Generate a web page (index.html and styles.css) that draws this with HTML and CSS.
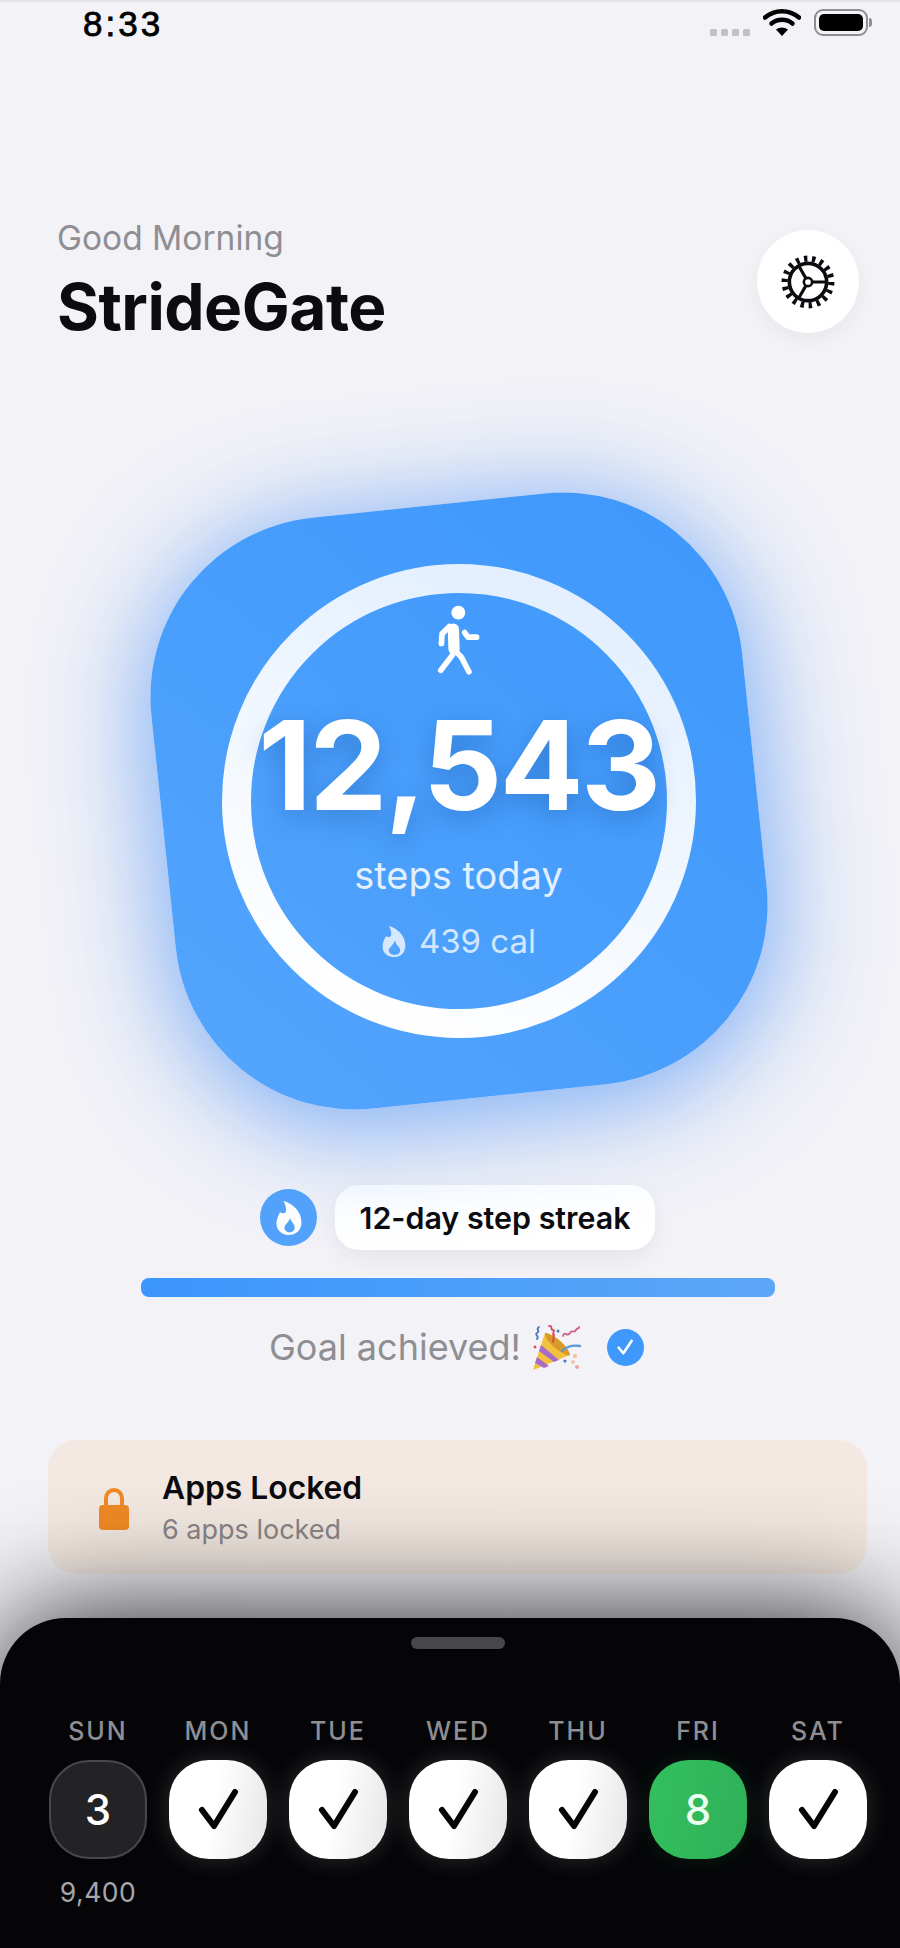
FILE: index.html
```html
<!DOCTYPE html>
<html lang="en">
<head>
<meta charset="utf-8">
<title>StrideGate</title>
<link rel="stylesheet" href="styles.css">
</head>
<body>
<main class="app">
  <div class="status-bar">
    <span class="clock">8:33</span>
    <div class="status-icons">
      <div class="signal"><i></i><i></i><i></i><i></i></div>
      <svg class="wifi" viewBox="0 0 38 28"><path d="M2 9.500C12 1 26 1 36 9.500" class="wifi-arc"/><path d="M8.500 15.500C14.500 10.500 23.500 10.500 29.500 15.500" class="wifi-arc"/><path d="M19 28L13 21.500C16.500 18.800 21.500 18.800 25 21.500Z" class="wifi-dot"/></svg>
      <div class="battery"><div class="battery-fill"></div></div>
      <div class="battery-tip"></div>
    </div>
  </div>

  <header class="header">
    <div class="titles">
      <p class="greeting">Good Morning</p>
      <h1 class="brand">StrideGate</h1>
    </div>
    <button class="settings" aria-label="Settings">
      <svg class="gear" viewBox="-27 -27 54 54">
        <circle r="22.500" class="gear-teeth" pathLength="18"/>
        <circle r="18" class="gear-ring"/>
        <path d="M4 0H18M-2 -3.500L-9 -15.600M-2 3.500L-9 15.600" class="gear-spokes"/>
        <circle r="4" class="gear-hub"/>
      </svg>
    </button>
  </header>

  <section class="hero">
    <div class="blob"></div>
    <svg class="ring" viewBox="0 0 474 474">
      <defs>
        <linearGradient id="ringFill" x1="0.700" y1="0" x2="0.300" y2="1">
          <stop offset="0" stop-color="#e3effe"/>
          <stop offset="1" stop-color="#ffffff"/>
        </linearGradient>
      </defs>
      <circle cx="237" cy="237" r="222.500" fill="none" stroke="url(#ringFill)" stroke-width="29"/>
    </svg>
    <div class="readout">
      <svg class="walker" viewBox="70 30 150 220">
        <circle cx="143" cy="62" r="21" class="walker-head"/>
        <path d="M128 112L130 172" class="walker-body"/>
        <path d="M116 104L94 126L92 155M162 122L172 136H198M125 190L90 236M132 175L152 196L175 240" class="walker-limbs"/>
      </svg>
      <div class="steps">12,543</div>
      <div class="steps-label">steps today</div>
      <div class="calories">
        <svg class="cal-flame" viewBox="0 0 24 30">
          <path d="M7 0C15 2 23 9 23 19C23 26 18 30 12 30C6 30 1 26 1 20C1 15 3 13 4 10C6 11 8 11 9 10C10 7 9 3 7 0Z" class="flame-pale"/>
          <path d="M13 14C14 19 18 20 18 23.500C18 26.500 15.500 28 12.500 28C9.500 28 7 26.500 7 23.500C7 21 11 19 13 14Z" class="flame-core"/>
        </svg>
        <span>439 cal</span>
      </div>
    </div>
  </section>

  <div class="streak">
    <div class="streak-badge">
      <svg class="streak-flame" viewBox="0 0 24 30">
        <path d="M7 0C15 2 23 9 23 19C23 26 18 30 12 30C6 30 1 26 1 20C1 15 3 13 4 10C6 11 8 11 9 10C10 7 9 3 7 0Z" class="flame-white"/>
        <path d="M13 15C14 19 17 20 17 23.500C17 26 15 27.500 12.500 27.500C10 27.500 8 26 8 23.500C8 21 11 20 13 15Z" class="flame-core"/>
      </svg>
    </div>
    <div class="streak-pill">12-day step streak</div>
  </div>

  <div class="progress"></div>

  <div class="goal">
    <span class="goal-text">Goal achieved!</span>
    <svg class="popper" viewBox="0 0 49 47">
      <path d="M1 46L13 9C22 10 36 22 38 31Z" fill="#f2c23e"/>
      <path d="M13 9C22 10 36 22 38 31C32 33 12 17 13 9Z" fill="#d99a2b"/>
      <path d="M9 21L27 36L22 38L7 27Z" fill="#a96bc9"/>
      <path d="M5 33L17 42L12 44L3 39Z" fill="#a96bc9"/>
      <path d="M7 3C3 5 9 7 5 9C2 11 8 12 5 15" class="conf conf-blue"/>
      <path d="M17 2C21 1 18 6 21 6C24 6 19 11 22 11L21 18" class="conf conf-red"/>
      <path d="M31 12C33 6 35 14 38 9C40 5 42 10 44 6C45 3 47 6 47 3" class="conf conf-pink"/>
      <path d="M30 27C35 22 42 21 48 22" class="conf conf-sky"/>
      <circle cx="26" cy="7" r="1.500" fill="#3f78c9"/>
      <circle cx="33" cy="37" r="1.600" fill="#3f78c9"/>
      <circle cx="43" cy="32" r="2" fill="#eebf98"/>
      <circle cx="41" cy="38" r="1.800" fill="#eebf98"/>
      <circle cx="45" cy="43" r="2" fill="#e9a6a0"/>
      <circle cx="3" cy="23" r="1.500" fill="#d9534f"/>
    </svg>
    <div class="goal-check">
      <svg viewBox="0 0 20 20"><path d="M5.500 10.500L8.800 14.500L14.800 5.500" class="goal-tick"/></svg>
    </div>
  </div>

  <section class="locked">
    <svg class="lock" viewBox="0 0 30 42">
      <path d="M7 19V10.500C7 5.500 10.500 2 15 2C19.500 2 23 5.500 23 10.500V19" class="lock-shackle"/>
      <rect x="0" y="17" width="30" height="25" rx="4" class="lock-body"/>
    </svg>
    <div class="locked-text">
      <div class="locked-title">Apps Locked</div>
      <div class="locked-sub">6 apps locked</div>
    </div>
  </section>

  <section class="sheet">
    <div class="handle"></div>
    <div class="week">
      <div class="day">
        <span class="day-name">SUN</span>
        <div class="tile tile-dark">3</div>
        <span class="day-count">9,400</span>
      </div>
      <div class="day">
        <span class="day-name">MON</span>
        <div class="tile tile-done"><svg class="tick" viewBox="0 0 42 42"><path d="M5 21L17 37L38 3"/></svg></div>
      </div>
      <div class="day">
        <span class="day-name">TUE</span>
        <div class="tile tile-done"><svg class="tick" viewBox="0 0 42 42"><path d="M5 21L17 37L38 3"/></svg></div>
      </div>
      <div class="day">
        <span class="day-name">WED</span>
        <div class="tile tile-done"><svg class="tick" viewBox="0 0 42 42"><path d="M5 21L17 37L38 3"/></svg></div>
      </div>
      <div class="day">
        <span class="day-name">THU</span>
        <div class="tile tile-done"><svg class="tick" viewBox="0 0 42 42"><path d="M5 21L17 37L38 3"/></svg></div>
      </div>
      <div class="day">
        <span class="day-name">FRI</span>
        <div class="tile tile-green">8</div>
      </div>
      <div class="day">
        <span class="day-name">SAT</span>
        <div class="tile tile-white"><svg class="tick" viewBox="0 0 42 42"><path d="M5 21L17 37L38 3"/></svg></div>
      </div>
    </div>
  </section>
</main>
</body>
</html>
```

FILE: styles.css
```css
* { box-sizing: border-box; }

html, body { margin: 0; padding: 0; }

body {
  font-family: Inter, "Liberation Sans", sans-serif;
  background: #f2f2f7;
  color: #0c0c10;
}

.app {
  width: 900px;
  height: 1948px;
  overflow: hidden;
  display: flex;
  flex-direction: column;
  background: #f2f2f7;
  border-top: 2px solid #e2e2e7;
}

/* status bar */
.status-bar {
  height: 48px;
  display: flex;
  justify-content: space-between;
  align-items: flex-start;
  padding: 4px 28px 0 83px;
}

.clock {
  font-family: "Liberation Sans", sans-serif;
  font-size: 35px;
  line-height: 36px;
  letter-spacing: 3px;
  color: #000;
  font-weight: 400;
  -webkit-text-stroke: 0.8px #000;
}

.status-icons {
  display: flex;
  align-items: flex-start;
  padding-top: 2px;
}

.signal {
  display: flex;
  gap: 4px;
  margin-top: 21px;
  margin-right: 13px;
}

.signal i {
  display: block;
  width: 7px;
  height: 7px;
  border-radius: 1.500px;
  background: #c0c0c5;
}

.wifi {
  width: 38px;
  height: 28px;
  margin-right: 13px;
}

.wifi-arc { fill: none; stroke: #000; stroke-width: 4.500; stroke-linecap: round; }
.wifi-dot { fill: #000; }

.battery {
  width: 54px;
  height: 27px;
  margin-top: 1px;
  border: 2.500px solid #8d8d92;
  border-radius: 9px;
  padding: 3px;
}

.battery-fill {
  height: 100%;
  background: #000;
  border-radius: 5px;
}

.battery-tip {
  width: 3px;
  height: 9px;
  margin: 10px 0 0 1px;
  background: #8d8d92;
  border-radius: 0 3px 3px 0;
}

/* header */
.header {
  display: flex;
  justify-content: space-between;
  align-items: flex-start;
  padding: 168px 41px 0 57px;
}

.greeting {
  margin: 0;
  font-size: 33.500px;
  line-height: 40px;
  color: #8e8e93;
  font-weight: 400;
}

.brand {
  margin: 15px 0 0;
  font-size: 64px;
  line-height: 68px;
  font-weight: 700;
  color: #0c0c10;
  letter-spacing: -0.500px;
}

.settings {
  width: 102px;
  height: 103px;
  margin-top: 12px;
  border: 0;
  padding: 0;
  border-radius: 50%;
  background: #fff;
  box-shadow: 0 6px 22px rgba(0, 0, 0, 0.05);
  display: grid;
  place-items: center;
}

.gear { width: 56px; height: 56px; }
.gear-teeth { fill: none; stroke: #0c0c10; stroke-width: 6; stroke-dasharray: 0.420 0.580; }
.gear-ring { fill: #fff; stroke: #0c0c10; stroke-width: 3.500; }
.gear-spokes { fill: none; stroke: #0c0c10; stroke-width: 3; }
.gear-hub { fill: #fff; stroke: #0c0c10; stroke-width: 2.500; }

/* hero */
.hero {
  margin-top: 151px;
  height: 618px;
  padding-left: 17px;
  display: grid;
  place-items: center;
}

.hero > * { grid-area: 1 / 1; }

.blob {
  width: 594px;
  height: 594px;
  border-radius: 180px;
  transform: rotate(-6deg);
  background: linear-gradient(45deg, #54a5fd, #3d97fb);
  box-shadow: 0 12px 100px 10px rgba(50, 130, 245, 0.6);
}

.ring {
  width: 474px;
  height: 474px;
  position: relative;
}

.readout {
  position: relative;
  width: 474px;
  height: 474px;
  padding-top: 38px;
  display: flex;
  flex-direction: column;
  align-items: center;
  color: #fff;
}

.walker { width: 50px; height: 73px; }
.walker-head { fill: #fff; }
.walker-body { fill: none; stroke: #fff; stroke-width: 34; stroke-linecap: round; }
.walker-limbs { fill: none; stroke: #fff; stroke-width: 17; stroke-linecap: round; stroke-linejoin: round; }

.steps {
  margin-top: 15px;
  font-size: 124px;
  line-height: 150px;
  font-weight: 700;
  letter-spacing: -2.500px;
  text-shadow: 0 8px 26px rgba(0, 50, 120, 0.28);
}

.steps-label {
  margin-top: 13px;
  font-size: 38px;
  line-height: 44px;
  font-weight: 400;
  color: rgba(255, 255, 255, 0.86);
}

.calories {
  margin-top: 25px;
  display: flex;
  align-items: center;
  gap: 12px;
  font-size: 33px;
  line-height: 38px;
  color: rgba(255, 255, 255, 0.75);
}

.cal-flame { width: 26px; height: 31px; }
.flame-pale { fill: #d5e8fe; }
.flame-white { fill: #fff; }
.flame-core { fill: #53a3fb; }

/* streak */
.streak {
  margin-top: 75px;
  padding-left: 260px;
  display: flex;
  align-items: center;
  gap: 18px;
}

.streak-badge {
  width: 57px;
  height: 57px;
  border-radius: 50%;
  background: #53a3fb;
  display: grid;
  place-items: center;
}

.streak-flame { width: 28px; height: 34px; }

.streak-pill {
  height: 65px;
  width: 320px;
  border-radius: 24px;
  background: #fff;
  box-shadow: 0 8px 24px rgba(0, 0, 0, 0.06);
  display: flex;
  align-items: center;
  justify-content: center;
  font-size: 30.400px;
  font-weight: 600;
  color: #0c0c10;
}

.progress {
  margin: 28px 125px 0 141px;
  height: 19px;
  border-radius: 8px;
  background: linear-gradient(90deg, #3b96fb, #5ca6f8);
}

/* goal */
.goal {
  margin-top: 26px;
  height: 48px;
  padding-left: 269px;
  display: flex;
  align-items: center;
}

.goal-text {
  font-size: 36px;
  line-height: 44px;
  color: #8e8e93;
}

.popper {
  width: 49px;
  height: 47px;
  margin-left: 11px;
}

.conf { fill: none; stroke-width: 1.800; stroke-linecap: round; }
.conf-blue { stroke: #4a79c4; }
.conf-red { stroke: #d8465c; }
.conf-pink { stroke: #cf5f86; }
.conf-sky { stroke: #5a9bdc; stroke-width: 2.400; }

.goal-check {
  width: 37px;
  height: 37px;
  margin-left: 26px;
  border-radius: 50%;
  background: #3f98fb;
  display: grid;
  place-items: center;
}

.goal-check svg { width: 28px; height: 28px; }
.goal-tick { fill: none; stroke: #fff; stroke-width: 1.800; stroke-linecap: round; stroke-linejoin: round; }

/* locked card */
.locked {
  margin: 69px 33px 0 48px;
  height: 134px;
  border-radius: 28px;
  background: #f3e9e2;
  display: flex;
  align-items: center;
  padding-left: 51px;
}

.lock { width: 30px; height: 42px; margin-top: 4px; }
.lock-shackle { fill: none; stroke: #f08a24; stroke-width: 4; }
.lock-body { fill: #f08a24; }

.locked-text { margin-left: 33px; margin-top: 2px; }

.locked-title {
  font-size: 31.800px;
  line-height: 38px;
  font-weight: 600;
  color: #0c0c10;
}

.locked-sub {
  margin-top: 6px;
  font-size: 27px;
  line-height: 34px;
  color: #8a8688;
}

/* bottom sheet */
.sheet {
  margin-top: auto;
  position: relative;
  height: 330px;
  background: #050508;
  border-radius: 66px 66px 0 0;
  box-shadow: 0 0 120px rgba(0, 0, 0, 0.9);
  padding-top: 19px;
}

.handle {
  width: 94px;
  height: 12px;
  margin-left: 411px;
  border-radius: 6px;
  background: #48484c;
}

.week {
  margin-top: 67px;
  padding: 0 33px 0 49px;
  display: grid;
  grid-template-columns: repeat(7, 98px);
  column-gap: 22px;
}

.day {
  display: flex;
  flex-direction: column;
  align-items: center;
}

.day-name {
  font-size: 25px;
  line-height: 30px;
  font-weight: 500;
  letter-spacing: 2px;
  color: #8e8e93;
}

.tile {
  width: 98px;
  height: 99px;
  margin-top: 14px;
  border-radius: 40px;
  display: grid;
  place-items: center;
  font-size: 42px;
  font-weight: 500;
  box-shadow: 0 0 26px rgba(255, 255, 255, 0.16);
}

.tile-dark {
  background: #232325;
  border: 2px solid #48484c;
  color: #fff;
  box-shadow: none;
}

.tile-done { background: linear-gradient(100deg, #ffffff 45%, #e6e6e8); }
.tile-white { background: #fff; }

.tile-green {
  background: linear-gradient(100deg, #33c05e, #2fb058);
  color: #eafff0;
  box-shadow: 0 0 22px rgba(52, 190, 90, 0.14);
}

.tick { width: 42px; height: 42px; }
.tick path { fill: none; stroke: #050508; stroke-width: 6; stroke-linecap: round; stroke-linejoin: round; }

.day-count {
  margin-top: 17px;
  font-size: 26.500px;
  line-height: 32px;
  letter-spacing: 0.500px;
  color: #a6a6ab;
}
```
